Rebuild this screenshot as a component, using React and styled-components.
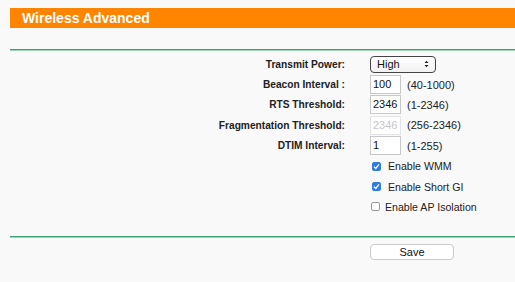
import React from "react";
import styled, { createGlobalStyle } from "styled-components";

// ---- Component ----

const rows = [
	{ label: "Beacon Interval :", value: "100", hint: "(40-1000)" },
	{ label: "RTS Threshold:", value: "2346", hint: "(1-2346)" },
	{ label: "Fragmentation Threshold:", value: "2346", hint: "(256-2346)", disabled: true },
	{ label: "DTIM Interval:", value: "1", hint: "(1-255)" },
];

const checks = [
	{ label: "Enable WMM", checked: true },
	{ label: "Enable Short GI", checked: true },
	{ label: "Enable AP Isolation", checked: false },
];

const Check = ({ checked }) => (
	<Box $checked={checked}>
		{checked && (
			<svg width="7" height="7" viewBox="0 0 7 7">
				<path d="M1 3.8 L2.8 5.5 L6 1.3" fill="none" stroke="#fff" strokeWidth="1.3" />
			</svg>
		)}
	</Box>
);

const App = () => {
	return (
		<>
			<GlobalStyle />
			<Page>
				<Title>Wireless Advanced</Title>
				<Rule />
				<Form>
					<Label>Transmit Power:</Label>
					<Field>
						<Select>
							<span>High</span>
							<svg width="5" height="8" viewBox="0 0 5 8">
								<path d="M0.5 3 L2.5 0.8 L4.5 3 Z M0.5 5 L2.5 7.2 L4.5 5 Z" fill="#222" />
							</svg>
						</Select>
					</Field>
					{rows.map((r) => (
						<React.Fragment key={r.label}>
							<Label>{r.label}</Label>
							<Field>
								<Input $disabled={r.disabled}>{r.value}</Input>
								<Hint>{r.hint}</Hint>
							</Field>
						</React.Fragment>
					))}
					{checks.map((c) => (
						<React.Fragment key={c.label}>
							<span />
							<CheckRow $checked={c.checked}>
								<Check checked={c.checked} />
								<span>{c.label}</span>
							</CheckRow>
						</React.Fragment>
					))}
				</Form>
				<Rule $bottom />
				<Actions>
					<SaveButton>Save</SaveButton>
				</Actions>
			</Page>
		</>
	);
};

export default App;

// ---- Style ----

const GlobalStyle = createGlobalStyle`
	body {
		margin: 0;
		background: #f9f9f9;
		font-family: "Liberation Sans", Arial, sans-serif;
		color: #111;
	}
`;

const Page = styled.div`
	padding: 8px 0 0 10px;
	width: 515px;
	box-sizing: border-box;
`;

const Title = styled.div`
	height: 20px;
	background: #ff8500;
	color: #fff;
	font-weight: bold;
	font-size: 14px;
	line-height: 21px;
	padding-left: 12px;
`;

const Rule = styled.div`
	margin-top: ${(p) => (p.$bottom ? "19px" : "21px")};
	height: 1px;
	background: #3f9f74;
	border-bottom: 1px solid #9fd4b9;
`;

const Form = styled.div`
	display: grid;
	grid-template-columns: 335px 1fr;
	column-gap: 25px;
	grid-auto-rows: 20.4px;
	align-items: center;
	padding-top: 3px;
`;

const Label = styled.div`
	text-align: right;
	font-weight: bold;
	font-size: 10.2px;
	color: #222;
`;

const Field = styled.div`
	display: flex;
	align-items: center;
	gap: 6px;
`;

const Select = styled.div`
	width: 66px;
	height: 17px;
	box-sizing: border-box;
	border: 1px solid #444;
	border-radius: 4px;
	background: linear-gradient(#ffffff, #f2f2f2);
	display: flex;
	align-items: center;
	justify-content: space-between;
	padding: 0 6px 0 6px;
	font-size: 11px;
`;

const Input = styled.div`
	width: 31px;
	height: 19px;
	box-sizing: border-box;
	border: 1px solid ${(p) => (p.$disabled ? "#e4e4e4" : "#c8c8c8")};
	background: #fff;
	color: ${(p) => (p.$disabled ? "#c8c8c8" : "#111")};
	font-size: 11px;
	line-height: 17px;
	padding-left: 2px;
`;

const Hint = styled.span`
	font-size: 11px;
	color: #222;
`;

const CheckRow = styled.div`
	display: flex;
	align-items: center;
	gap: ${(p) => (p.$checked ? "7px" : "5px")};
	font-size: 10.6px;
	color: #222;
	padding-left: ${(p) => (p.$checked ? "2px" : "1px")};
`;

const Box = styled.span`
	width: 9px;
	height: 9px;
	box-sizing: border-box;
	border-radius: 2px;
	display: flex;
	align-items: center;
	justify-content: center;
	background: ${(p) => (p.$checked ? "#2f7be6" : "#fff")};
	border: 1px solid ${(p) => (p.$checked ? "#2f7be6" : "#9a9a9a")};
`;

const Actions = styled.div`
	padding: 4px 0 0 360px;
`;

const SaveButton = styled.button`
	width: 84px;
	height: 16px;
	border: 1px solid #c9c9c9;
	border-radius: 4px;
	background: #fff;
	font-family: "Liberation Sans", Arial, sans-serif;
	font-size: 11px;
	color: #111;
	padding: 0;
	line-height: 14px;
`;
